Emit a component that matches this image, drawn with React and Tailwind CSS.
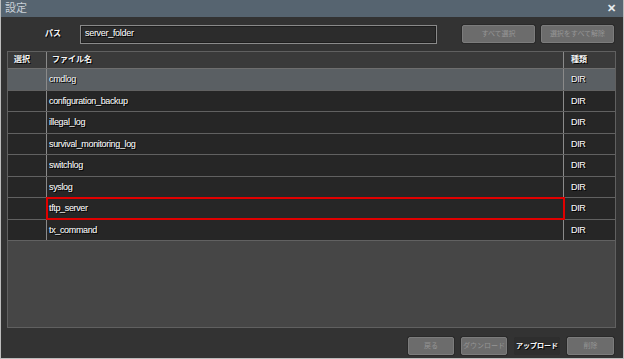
import React from "react";

const rows = [
  "cmdlog",
  "configuration_backup",
  "illegal_log",
  "survival_monitoring_log",
  "switchlog",
  "syslog",
  "tftp_server",
  "tx_command",
];

const font = { fontFamily: '"Liberation Sans", "Noto Sans CJK JP", sans-serif' };

function DisabledBtn({ children, w }) {
  return (
    <div
      className={`h-[18px] ${w} flex items-center justify-center whitespace-nowrap rounded-[2px] bg-[#6c6c6c] border border-[#7c7c7c] text-[7px] text-[#959595] shadow-[0_0_0_1px_#2a2a2a]`}
    >
      {children}
    </div>
  );
}

export default function App() {
  return (
    <div
      className="w-[624px] h-[359px] bg-[#333333] border-l border-b border-r border-[#bdbdbd] flex flex-col overflow-hidden text-[#f4f4f4] [text-shadow:0_0_1px_#000,1px_1px_0_#000,0_0_0.3px_#fff]"
      style={font}
    >
      {/* title bar */}
      <div className="h-[17px] bg-[#566470] flex items-center justify-between pl-[4px] pr-[7px] shrink-0 [text-shadow:none]">
        <span className="text-[11px] text-[#c9d1d8] leading-none">設定</span>
        <span className="text-[11px] text-[#e8ecef] font-bold leading-none">✕</span>
      </div>

      {/* path row */}
      <div className="flex items-center h-[34px] shrink-0">
        <span className="ml-[44px] w-[35px] text-[8px] font-bold">パス</span>
        <div className="w-[357px] h-[19px] bg-[#2c2c2c] border border-[#8a8a8a] shadow-[inset_0_0_0_1px_#1e1e1e] flex items-center pl-[4px] text-[9px] tracking-[-0.3px]">
          server_folder
        </div>
        <div className="ml-[25px] flex gap-[6px] [text-shadow:none]">
          <DisabledBtn w="w-[73px]">すべて選択</DisabledBtn>
          <DisabledBtn w="w-[73px]">選択をすべて解除</DisabledBtn>
        </div>
      </div>

      {/* table panel */}
      <div className="mx-[6px] w-[609px] h-[277px] bg-[#464646] border border-[#606060] flex flex-col shrink-0">
        {/* header */}
        <div className="flex h-[17px] bg-[#3a3a3a] border-b border-[#6e6e6e] text-[8px] font-bold shrink-0">
          <div className="w-[39px] border-r border-[#8a8a8a] pl-[6px] flex items-center">選択</div>
          <div className="flex-1 border-r border-[#8a8a8a] pl-[5px] flex items-center">ファイル名</div>
          <div className="w-[51px] pl-[7px] flex items-center">種類</div>
        </div>
        {rows.map((r, i) => (
          <div
            key={r}
            className={`flex h-[21.5px] shrink-0 border-b border-[#616161] text-[9px] tracking-[-0.35px] ${
              i === 0 ? "bg-[#5a5f63]" : "bg-[#262626]"
            }`}
          >
            <div className="w-[39px] border-r border-[#8a8a8a]"></div>
            <div
              className={`flex-1 border-r border-[#8a8a8a] pl-[2px] flex items-center pt-[1px] ${
                r === "tftp_server" ? "outline-2 outline-[#e00000] -outline-offset-1" : ""
              }`}
            >
              {r}
            </div>
            <div className="w-[51px] pl-[7px] flex items-center pt-[1px]">DIR</div>
          </div>
        ))}
      </div>

      {/* footer buttons */}
      <div className="flex-1 flex items-center justify-end pr-[9px] gap-[7px] pt-[6px]">
        <div className="flex gap-[7px] [text-shadow:none]">
          <DisabledBtn w="w-[46px]">戻る</DisabledBtn>
          <DisabledBtn w="w-[46px]">ダウンロード</DisabledBtn>
        </div>
        <div className="h-[18px] w-[46px] flex items-center justify-center whitespace-nowrap rounded-[2px] bg-[#2e2e2e] text-[7px] font-bold">
          アップロード
        </div>
        <div className="[text-shadow:none]">
          <DisabledBtn w="w-[47px]">削除</DisabledBtn>
        </div>
      </div>
    </div>
  );
}
